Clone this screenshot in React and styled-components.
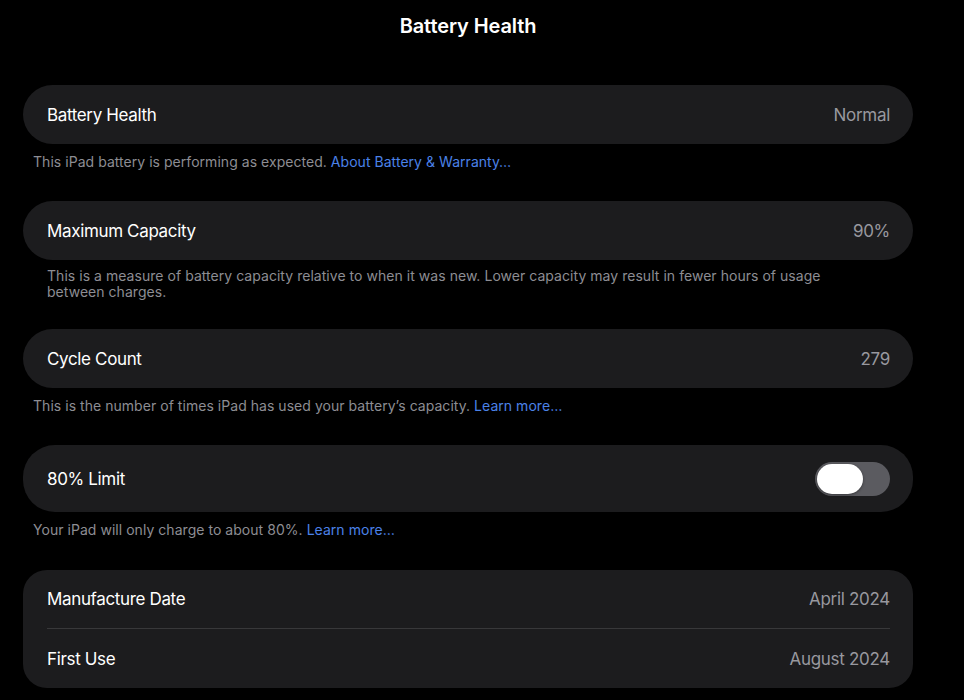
import styled, { createGlobalStyle } from 'styled-components';

const GlobalStyle = createGlobalStyle`
  html, body {
    margin: 0;
    padding: 0;
    background: #000;
  }
  body {
    font-family: Inter, "Noto Sans", "Liberation Sans", sans-serif;
    -webkit-font-smoothing: antialiased;
  }
`;

const Page = styled.div`
  width: 964px;
  height: 700px;
  overflow: hidden;
  background: #000;
  box-sizing: border-box;
  padding: 0 51px 0 23px;
`;

const Header = styled.h1`
  margin: 0;
  height: 85px;
  padding-top: 13px;
  box-sizing: border-box;
  text-align: center;
  font-size: 20px;
  line-height: 26px;
  font-weight: 600;
  color: #fff;
  letter-spacing: -0.1px;
`;

const Section = styled.section`
  display: flex;
  flex-direction: column;
  margin-bottom: ${({ $gap }) => $gap || 30}px;
`;

const Card = styled.div`
  background: #1c1c1e;
  border-radius: ${({ $radius }) => $radius || 30}px;
  padding: 0 23px 0 24px;
  display: flex;
  flex-direction: column;
`;

const Row = styled.div`
  height: ${({ $height }) => $height || 59}px;
  display: flex;
  align-items: center;
  justify-content: space-between;
  border-bottom: ${({ $divider }) => ($divider ? '1px solid #38383a' : 'none')};
  box-sizing: border-box;
`;

const Label = styled.span`
  font-size: 17px;
  color: #fff;
  letter-spacing: -0.35px;
`;

const Value = styled.span`
  font-size: 17px;
  color: #98989f;
  letter-spacing: -0.3px;
`;

const Footnote = styled.p`
  margin: ${({ $top }) => $top || 9}px 0 0;
  padding-left: ${({ $indent }) => $indent || 10}px;
  padding-right: 60px;
  font-size: 14px;
  line-height: ${({ $lh }) => $lh || 18}px;
  letter-spacing: 0.04px;
  color: #8d8d93;
`;

const Link = styled.a`
  color: #4b82e8;
  text-decoration: none;
`;

const Toggle = styled.div`
  width: 75px;
  height: 34px;
  border-radius: 17px;
  background: #5b5b60;
  padding: 2px;
  box-sizing: border-box;
  display: flex;
  align-items: center;
`;

const Knob = styled.div`
  width: 46px;
  height: 30px;
  border-radius: 15px;
  background: #fff;
  box-shadow: 0 1px 3px rgba(0, 0, 0, 0.4);
`;

export default function App() {
  return (
    <>
      <GlobalStyle />
      <Page>
        <Header>Battery Health</Header>

        <Section $gap={30}>
          <Card>
            <Row>
              <Label>Battery Health</Label>
              <Value>Normal</Value>
            </Row>
          </Card>
          <Footnote>
            This iPad battery is performing as expected.{' '}
            <Link>About Battery &amp; Warranty…</Link>
          </Footnote>
        </Section>

        <Section $gap={29}>
          <Card>
            <Row>
              <Label>Maximum Capacity</Label>
              <Value>90%</Value>
            </Row>
          </Card>
          <Footnote $top={8} $indent={24} $lh={16}>
            This is a measure of battery capacity relative to when it was new. Lower capacity may result in fewer hours of usage between charges.
          </Footnote>
        </Section>

        <Section $gap={30}>
          <Card>
            <Row>
              <Label>Cycle Count</Label>
              <Value>279</Value>
            </Row>
          </Card>
          <Footnote>
            This is the number of times iPad has used your battery’s capacity.{' '}
            <Link>Learn more…</Link>
          </Footnote>
        </Section>

        <Section $gap={31}>
          <Card $radius={32}>
            <Row $height={67}>
              <Label>80% Limit</Label>
              <Toggle>
                <Knob />
              </Toggle>
            </Row>
          </Card>
          <Footnote>
            Your iPad will only charge to about 80%. <Link>Learn more…</Link>
          </Footnote>
        </Section>

        <Section>
          <Card $radius={24}>
            <Row $divider>
              <Label>Manufacture Date</Label>
              <Value>April 2024</Value>
            </Row>
            <Row>
              <Label>First Use</Label>
              <Value>August 2024</Value>
            </Row>
          </Card>
        </Section>
      </Page>
    </>
  );
}
